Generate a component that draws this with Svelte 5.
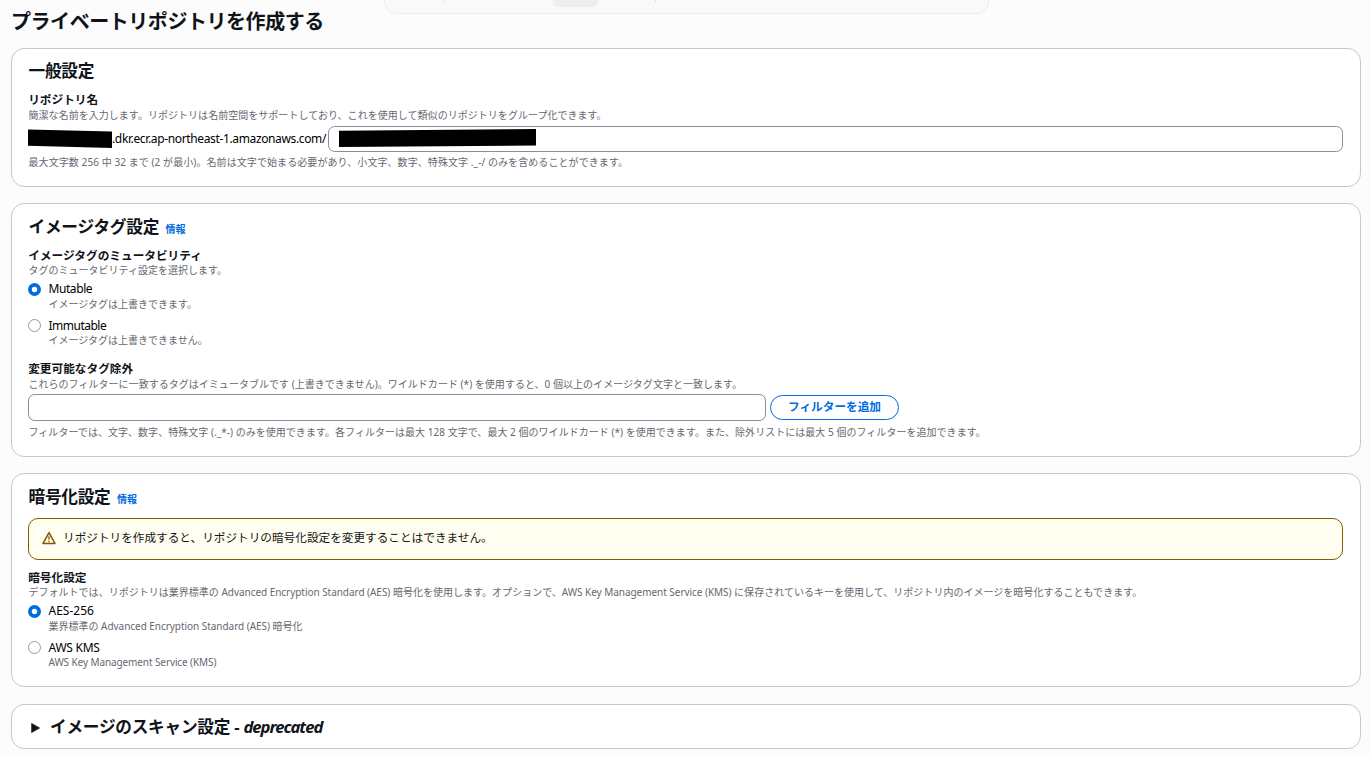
<script>
  let tagMode = $state('mutable');
  let encryption = $state('aes');
  let filter = $state('');
</script>

{#snippet radio(checked)}
  <svg class="radio" viewBox="0 0 13 13" aria-hidden="true">
    {#if checked}
      <circle cx="6.5" cy="6.5" r="6.5" fill="#006ce0" />
      <circle cx="6.5" cy="6.5" r="2.7" fill="#fff" />
    {:else}
      <circle cx="6.5" cy="6.5" r="6" fill="#fff" stroke="#8c8c94" stroke-width="0.9" />
    {/if}
  </svg>
{/snippet}

<div class="toolbar"><i class="tick"></i><i class="pill"></i><i class="tick"></i></div>

<main>
  <h1>プライベートリポジトリを作成する</h1>

  <section class="general">
    <h2>一般設定</h2>
    <div class="label">リポジトリ名</div>
    <div class="hint h-a">簡潔な名前を入力します。リポジトリは名前空間をサポートしており、これを使用して類似のリポジトリをグループ化できます。</div>
    <div class="repo">
      <svg class="mask-a" width="84" height="20" viewBox="0 0 84 20"><path d="M0 3.5 84 5.5V22L0 19.7Z" /></svg>
      <span class="host">.dkr.ecr.ap-northeast-1.amazonaws.com/</span>
      <div class="input name">
        <svg class="mask-b" width="197" height="20" viewBox="0 0 197 20"><path d="M0 2.7 197 1V17.5L0 19Z" /></svg>
      </div>
    </div>
    <div class="hint after">最大文字数 256 中 32 まで (2 が最小)。名前は文字で始まる必要があり、小文字、数字、特殊文字 ._-/ のみを含めることができます。</div>
  </section>

  <section class="tags">
    <h2>イメージタグ設定<a>情報</a></h2>
    <div class="label">イメージタグのミュータビリティ</div>
    <div class="hint">タグのミュータビリティ設定を選択します。</div>
    <div class="options">
      <div class="option">
        {@render radio(tagMode === 'mutable')}
        <div><div class="name-line mut">Mutable</div><div class="desc">イメージタグは上書きできます。</div></div>
      </div>
      <div class="option">
        {@render radio(tagMode === 'immutable')}
        <div><div class="name-line imm">Immutable</div><div class="desc">イメージタグは上書きできません。</div></div>
      </div>
    </div>
    <div class="label second">変更可能なタグ除外</div>
    <div class="hint h-b">これらのフィルターに一致するタグはイミュータブルです (上書きできません)。ワイルドカード (*) を使用すると、0 個以上のイメージタグ文字と一致します。</div>
    <div class="filter">
      <input class="input" bind:value={filter} />
      <button>フィルターを追加</button>
    </div>
    <div class="hint h-c">フィルターでは、文字、数字、特殊文字 (._*-) のみを使用できます。各フィルターは最大 128 文字で、最大 2 個のワイルドカード (*) を使用できます。また、除外リストには最大 5 個のフィルターを追加できます。</div>
  </section>

  <section class="crypto">
    <h2>暗号化設定<a>情報</a></h2>
    <div class="alert">
      <svg width="14" height="14" viewBox="0 0 16 16" fill="none" stroke="#855900" stroke-width="1.8" stroke-linejoin="round" aria-hidden="true">
        <path d="M8 1.9 1.2 14.2h13.6L8 1.9Z" />
        <path d="M8 6v3.9M8 11v1.8" stroke-width="1.5" />
      </svg>
      <span>リポジトリを作成すると、リポジトリの暗号化設定を変更することはできません。</span>
    </div>
    <div class="label">暗号化設定</div>
    <div class="hint h-d">デフォルトでは、リポジトリは業界標準の <span class="l1">Advanced Encryption Standard (AES)</span> 暗号化を使用します。オプションで、<span class="l1">AWS Key Management Service (KMS)</span> に保存されているキーを使用して、リポジトリ内のイメージを暗号化することもできます。</div>
    <div class="options">
      <div class="option">
        {@render radio(encryption === 'aes')}
        <div><div class="name-line aes">AES-256</div><div class="desc">業界標準の <span class="l1">Advanced Encryption Standard (AES)</span> 暗号化</div></div>
      </div>
      <div class="option">
        {@render radio(encryption === 'kms')}
        <div><div class="name-line kms">AWS KMS</div><div class="desc"><span class="l2">AWS Key Management Service (KMS)</span></div></div>
      </div>
    </div>
  </section>

  <section class="scan">
    <svg width="9" height="10" viewBox="0 0 9 10" aria-hidden="true"><path d="M.5.3 8.8 5 .5 9.7Z" fill="#0f141a" stroke="#0f141a" stroke-width=".5" stroke-linejoin="round" /></svg>
    <h2>イメージのスキャン設定 - <em>deprecated</em></h2>
  </section>
</main>

<style>
  :global(body) {
    background: #fcfcfd;
    overflow: hidden;
  }
  main {
    box-sizing: border-box;
    width: 1370px;
    height: 757px;
    padding: 9px 9px 0 11px;
    overflow: hidden;
    font-family: 'Noto Sans', 'Noto Sans CJK JP', sans-serif;
    color: #0f141a;
    white-space: nowrap;
  }
  .toolbar {
    position: absolute;
    top: -20px;
    left: 384px;
    box-sizing: border-box;
    width: 605px;
    height: 34px;
    padding: 19px 0 0 59px;
    display: flex;
    background: #f9f9f9;
    border: 1px solid #ececec;
    border-radius: 12px;
  }
  .tick {
    width: 1px;
    height: 2px;
    background: #e2e2e2;
  }
  .pill {
    width: 45px;
    height: 7px;
    margin: 0 57px 0 108px;
    background: #eee;
    border-radius: 0 0 5px 5px;
  }
  h1 {
    margin: 0;
    height: 39px;
    font: 700 20px/24px 'Noto Sans CJK JP', sans-serif;
    letter-spacing: -0.45px;
  }
  section {
    box-sizing: border-box;
    background: #fff;
    border: 1px solid #c6c6cd;
    border-radius: 13.3px;
    padding: 11px 17px 0 16px;
  }
  .general { height: 139px; }
  .tags { height: 254px; margin-top: 16px; padding-top: 12px; }
  .crypto { height: 214px; margin-top: 16px; padding-top: 12px; }
  .scan {
    height: 45px;
    margin-top: 17px;
    padding: 0 0 0 19px;
    display: flex;
    align-items: center;
    gap: 10px;
  }
  .scan svg { margin-top: 2px; }
  h2 {
    margin: 0;
    padding-left: 0.5px;
    height: 22px;
    font-size: 16.67px;
    line-height: 22px;
    font-weight: 700;
    letter-spacing: -0.25px;
  }
  .scan h2 { padding: 0; }
  h2 a {
    margin-left: 6.5px;
    font-size: 10px;
    letter-spacing: 0;
    color: #006ce0;
  }
  em { letter-spacing: -1px; }
  .label {
    margin-top: 10px;
    padding-left: 0.2px;
    height: 15px;
    font-size: 11.67px;
    line-height: 15px;
    font-weight: 700;
  }
  .hint, .desc {
    height: 15px;
    font-size: 10px;
    line-height: 15px;
    color: #656871;
  }
  .hint { padding-left: 0.5px; }
  .l1 { letter-spacing: -0.045px; }
  .l2 { letter-spacing: -0.1px; }
  .h-a { padding-top: 1px; height: 14px; letter-spacing: 0.035px; }
  .repo {
    display: flex;
    align-items: center;
    height: 26px;
    margin-top: 4px;
  }
  .mask-a { flex: none; overflow: visible; align-self: flex-start; }
  .mask-b { display: block; overflow: visible; margin: 1px 0 0 10px; }
  .host {
    flex: none;
    width: 216px;
    font-size: 12px;
    line-height: 16px;
    letter-spacing: -0.36px;
    color: #000;
  }
  .input {
    box-sizing: border-box;
    border: 1px solid #8c8c94;
    border-radius: 6.67px;
    background: #fff;
    padding: 0;
    outline: none;
  }
  .input.name { flex: 1; height: 26px; }
  .after { margin-top: 3px; letter-spacing: 0.08px; }
  .options { display: flex; flex-direction: column; gap: 6px; margin-top: 3px; }
  .option { display: flex; gap: 7.5px; height: 31px; }
  .option + .option { height: 30px; }
  .radio { width: 13px; height: 13px; margin-top: 2px; flex: none; }
  .option + .option .radio { margin-top: 1px; }
  .name-line { height: 16px; font-size: 12px; line-height: 15px; color: #000; }
  .option + .option .name-line { height: 15px; }
  .mut { letter-spacing: -0.42px; }
  .imm { letter-spacing: -0.5px; }
  .aes { letter-spacing: 0; }
  .kms { letter-spacing: -0.25px; }
  .second { margin-top: 13px; }
  .filter { display: flex; align-items: center; gap: 4px; height: 27px; margin-top: 2px; }
  .filter input { width: 738px; height: 27px; }
  button {
    box-sizing: border-box;
    width: 129px;
    height: 25px;
    padding: 0 0 3px;
    border: 1.5px solid #006ce0;
    border-radius: 13px;
    background: #fff;
    color: #006ce0;
    font: 700 11.67px/20px 'Noto Sans CJK JP', sans-serif;
  }
  .h-b { padding-top: 1px; letter-spacing: 0.03px; }
  .h-c { margin-top: 4px; letter-spacing: 0.035px; }
  .h-d { letter-spacing: 0.02px; }
  .alert {
    box-sizing: border-box;
    display: flex;
    align-items: center;
    gap: 7px;
    height: 42px;
    margin-top: 10px;
    padding: 0 0 2px 13px;
    border: 1px solid #855900;
    border-radius: 10px;
    background: #fffef0;
    font-size: 11.67px;
    line-height: 16px;
    letter-spacing: -0.02px;
  }
</style>
